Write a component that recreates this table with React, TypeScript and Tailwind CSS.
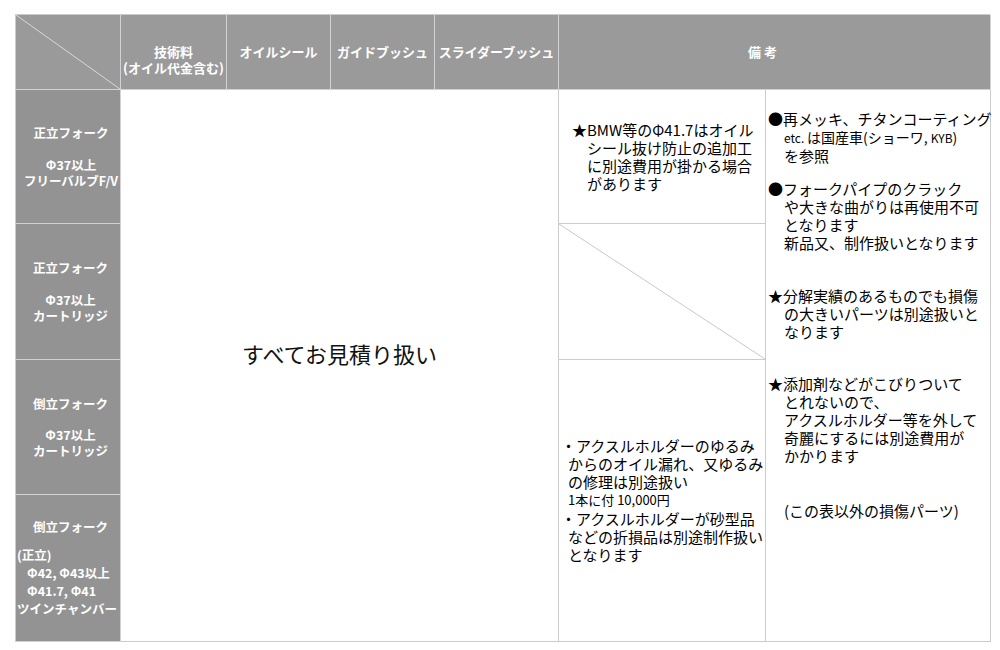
import React from "react";

const Diag = ({ color }: { color: string }) => (
  <svg
    className="pointer-events-none absolute inset-0 h-full w-full"
    viewBox="0 0 100 100"
    preserveAspectRatio="none"
  >
    <line x1="0" y1="0" x2="100" y2="100" stroke={color} strokeWidth="1" vectorEffect="non-scaling-stroke" />
  </svg>
);

const head = "row-start-1 flex flex-col items-center pt-[29px] bg-[#9a9a9a] border-r border-b border-[#d2d2d2] text-white font-bold text-[13px] leading-[16px] whitespace-nowrap";
const side = "col-start-1 flex flex-col justify-center overflow-hidden bg-[#939393] border-r border-b border-[#d2d2d2] text-white font-bold text-[12.5px] leading-[16px] whitespace-nowrap";
const cell = "border-r border-b border-[#cccccc] bg-white";

const App = () => {
  return (
    <div className="min-h-[650px] bg-white pl-[15px] pt-[14px] font-['Noto_Sans_CJK_JP','Noto_Sans',sans-serif] text-black">
      <div className="grid w-[975px] grid-cols-[105px_106px_104px_104px_124px_207px_225px] grid-rows-[75px_134px_136px_135px_147px] border-l border-t border-[#cccccc]">
        {/* header */}
        <div className={`${head} relative col-start-1`}>
          <Diag color="#d8d8d8" />
        </div>
        <div className={`${head} col-start-2`}>
          <div>技術料</div>
          <div>(オイル代金含む)</div>
        </div>
        <div className={`${head} col-start-3`}>オイルシール</div>
        <div className={`${head} col-start-4`}>ガイドブッシュ</div>
        <div className={`${head} col-start-5`}>スライダーブッシュ</div>
        <div className={`${head} col-start-6 col-span-2 pr-[24px]`}>備 考</div>

        {/* left column */}
        <div className={`${side} row-start-2 items-center pl-[6px]`}>
          <div>正立フォーク</div>
          <div className="mt-[16px]">Φ37以上</div>
          <div>フリーバルブF/V</div>
        </div>
        <div className={`${side} row-start-3 items-center pl-[5px]`}>
          <div>正立フォーク</div>
          <div className="mt-[16px]">Φ37以上</div>
          <div>カートリッジ</div>
        </div>
        <div className={`${side} row-start-4 items-center pl-[5px]`}>
          <div>倒立フォーク</div>
          <div className="mt-[15px]">Φ37以上</div>
          <div>カートリッジ</div>
        </div>
        <div className={`${side} row-start-5 leading-[18px]`}>
          <div className="pl-[5px] text-center">倒立フォーク</div>
          <div className="mt-[10px] pl-[1px]">(正立)</div>
          <div className="pl-[11px]">Φ42, Φ43以上</div>
          <div className="pl-[11px]">Φ41.7, Φ41</div>
          <div className="pl-[1px]">ツインチャンバー</div>
        </div>

        {/* main estimate cell */}
        <div className={`${cell} col-start-2 col-span-4 row-start-2 row-span-4 flex items-center justify-center pb-[24px] text-[22px] text-[#111]`}>
          すべてお見積り扱い
        </div>

        {/* remarks column A */}
        <div className={`${cell} col-start-6 row-start-2 flex flex-col justify-center pl-[13px] text-[15px] leading-[18px] whitespace-nowrap`}>
          <div>★BMW等のΦ41.7はオイル</div>
          <div className="pl-[15px]">シール抜け防止の追加工</div>
          <div className="pl-[15px]">に別途費用が掛かる場合</div>
          <div className="pl-[15px]">があります</div>
        </div>
        <div className={`${cell} relative col-start-6 row-start-3`}>
          <Diag color="#c8c8c8" />
        </div>
        <div className={`${cell} col-start-6 row-start-4 row-span-2 flex flex-col justify-center pl-[9px] text-[15px] leading-[18px] whitespace-nowrap`}>
          <div className="-ml-[7px]">・アクスルホルダーのゆるみ</div>
          <div>からのオイル漏れ、又ゆるみ</div>
          <div>の修理は別途扱い</div>
          <div className="text-[13px] leading-[17px]">1本に付 10,000円</div>
          <div className="-ml-[7px] mt-[2px]">・アクスルホルダーが砂型品</div>
          <div>などの折損品は別途制作扱い</div>
          <div>となります</div>
        </div>

        {/* remarks column B */}
        <div className={`${cell} col-start-7 row-start-2 row-span-4 flex flex-col pl-[2px] pt-[20px] text-[15px] leading-[18px] whitespace-nowrap`}>
          <div>●再メッキ、チタンコーティング</div>
          <div className="pl-[16px] text-[14px]">
            <span className="text-[12px]">etc. </span>は国産車(ショーワ, <span className="text-[12px]">KYB</span>)
          </div>
          <div className="pl-[16px]">を参照</div>

          <div className="mt-[15px]">●フォークパイプのクラック</div>
          <div className="pl-[16px]">や大きな曲がりは再使用不可</div>
          <div className="pl-[16px]">となります</div>
          <div className="pl-[16px]">新品又、制作扱いとなります</div>

          <div className="mt-[35px]">★分解実績のあるものでも損傷</div>
          <div className="pl-[16px]">の大きいパーツは別途扱いと</div>
          <div className="pl-[16px]">なります</div>

          <div className="mt-[34px]">★添加剤などがこびりついて</div>
          <div className="pl-[16px]">とれないので、</div>
          <div className="pl-[16px]">アクスルホルダー等を外して</div>
          <div className="pl-[16px]">奇麗にするには別途費用が</div>
          <div className="pl-[16px]">かかります</div>

          <div className="mt-[37px] pl-[16px]">(この表以外の損傷パーツ)</div>
        </div>
      </div>
    </div>
  );
};

export default App;
